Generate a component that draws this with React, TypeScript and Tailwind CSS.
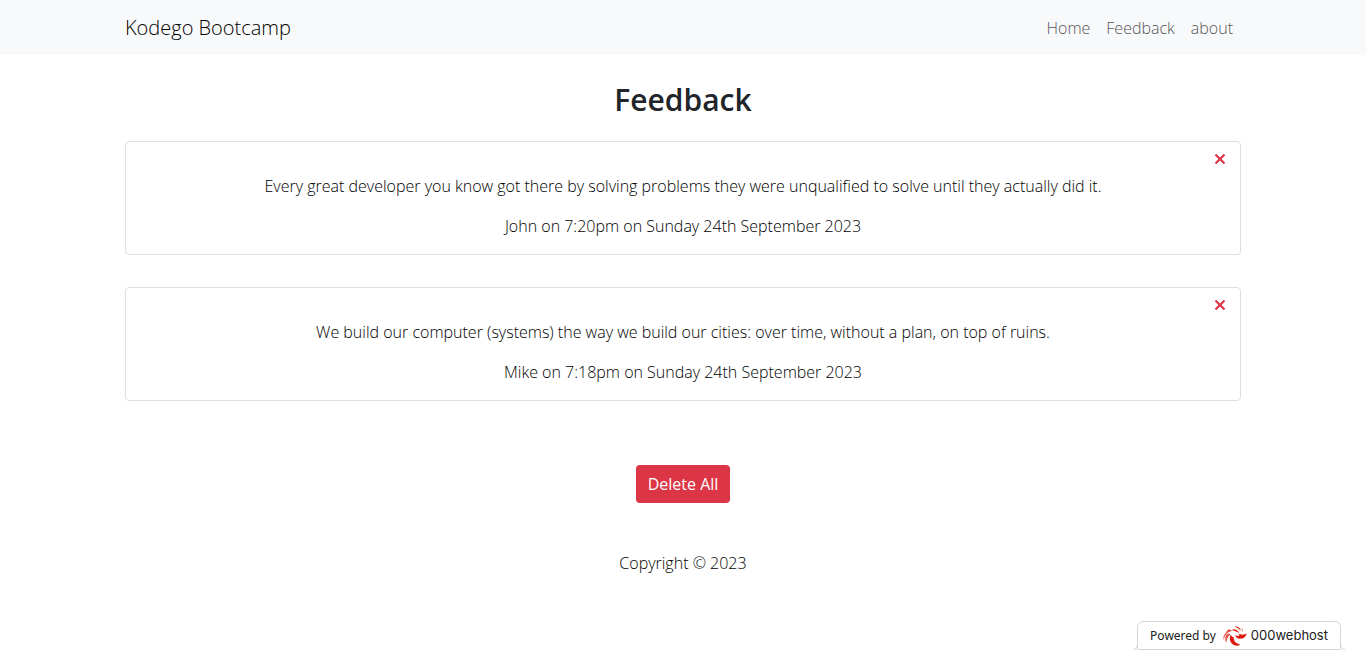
import React from "react";

const links = ["Home", "Feedback", "about"];

const entries = [
  {
    text: "Every great developer you know got there by solving problems they were unqualified to solve until they actually did it.",
    by: "John on 7:20pm on Sunday 24th September 2023",
  },
  {
    text: "We build our computer (systems) the way we build our cities: over time, without a plan, on top of ruins.",
    by: "Mike on 7:18pm on Sunday 24th September 2023",
  },
];

function CrossIcon() {
  return (
    <svg width="16" height="18" viewBox="0 0 16 18" fill="none" stroke="currentColor" strokeWidth="2.2" aria-hidden="true">
      <path d="M3.500 4.500L12.500 13.500M12.500 4.500L3.500 13.500" />
    </svg>
  );
}

function HostLogo() {
  return (
    <svg width="24" height="20" viewBox="0 0 72 60" fill="#dd1a0c" aria-hidden="true">
      <path d="M23 26C16 41 25 59 43 59C47 59 51 57 51 55C40 54 32 46 32 34C28 32 25 30 23 26Z" />
      <path d="M36 27C40 40 54 41 62 32C66 29 69 26 71 22C68 25 63 26 59 26C54 25 49 24 45 24C54 28 46 33 36 27Z" />
      <path d="M59 26C65 28 68 26 71 21C70 31 62 39 52 38C57 35 60 31 59 26Z" />
      <path d="M26 12C33 7 45 11 48 22C41 16 34 14 26 12Z" />
      <path d="M35 2C44 1 53 6 53 15C49 8 43 5 35 2Z" />
      <path d="M54 5C59 8 61 13 59 17C58 12 57 8 54 5Z" />
      <path d="M19 9C11 14 8 20 7 27C12 20 18 16 28 14C24 13 21 12 19 9Z" opacity=".8" />
      <path d="M16 22C7 28 4 40 10 51C11 40 14 32 23 25C20 25 18 24 16 22Z" opacity=".75" />
      <path d="M6 22C1 29 0 35 2 42C5 34 7 29 11 24Z" opacity=".6" />
    </svg>
  );
}

function HostBadge() {
  return (
    <a href="#" className="fixed right-[21px] bottom-0 flex items-end font-normal text-[#212121]">
      <svg width="5" height="6" viewBox="0 0 5 6" fill="none" stroke="#d5d5d5" aria-hidden="true">
        <path d="M0 5.500C3 5.500 4.500 3 4.500 0" />
      </svg>
      <span className="-mx-px flex h-[29px] items-center rounded-t-md border border-[#d5d5d5] bg-white px-3">
        <span className="font-['Noto_Sans',sans-serif] text-xs">Powered by</span>
        <span className="mr-1 ml-[7px]">
          <HostLogo />
        </span>
        <span className="font-['Inter',sans-serif] text-[13px]">000webhost</span>
      </span>
      <svg width="5" height="6" viewBox="0 0 5 6" fill="none" stroke="#d5d5d5" aria-hidden="true">
        <path d="M5 5.500C2 5.500 .5 3 .5 0" />
      </svg>
    </a>
  );
}

export default function App() {
  return (
    <div className="min-h-screen bg-white font-['Open_Sans','Noto_Sans',sans-serif] font-light text-black">
      <nav className="bg-[#f8f9fa] py-2">
        <div className="mx-auto flex max-w-[1140px] items-center justify-between px-3">
          <a href="#" className="text-xl leading-[39px]">Kodego Bootcamp</a>
          <ul className="flex">
            {links.map((l) => (
              <li key={l}>
                <a href="#" className="px-2 text-base text-[#555658]">{l}</a>
              </li>
            ))}
          </ul>
        </div>
      </nav>
      <main className="mx-auto flex max-w-[1140px] flex-col items-center px-3 pt-[26px]">
        <h2 className="text-[30px] leading-[38px] font-semibold text-[#212529]">Feedback</h2>
        <div className="mt-[22px] flex w-full flex-col gap-8">
          {entries.map((e) => (
            <article key={e.by} className="relative flex flex-col gap-4 rounded border border-[#dfdfdf] px-4 pt-8 pb-4 text-center text-base">
              <button type="button" aria-label="Delete" className="absolute top-2 right-3 text-[#dc3545]">
                <CrossIcon />
              </button>
              <p>{e.text}</p>
              <p>{e.by}</p>
            </article>
          ))}
        </div>
        <button type="button" className="mt-16 h-[38px] rounded bg-[#dc3545] px-3 font-normal text-white">Delete All</button>
      </main>
      <footer className="mt-12 text-center">Copyright © 2023</footer>
      <HostBadge />
    </div>
  );
}
